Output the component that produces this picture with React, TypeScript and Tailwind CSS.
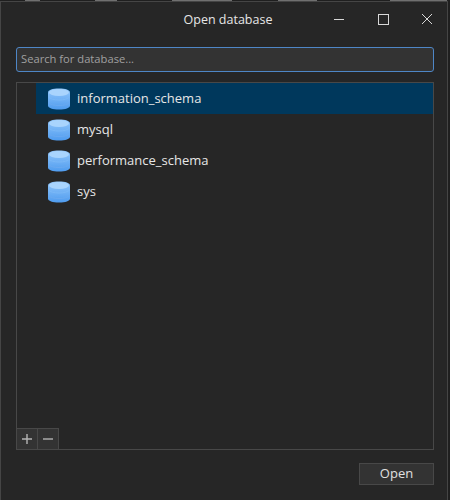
const rows = ["information_schema", "mysql", "performance_schema", "sys"];
const marks = [
  ["ml-[25px]", "w-[15px]"],
  ["ml-[55px]", "w-[22px]"],
  ["ml-[55px]", "w-[60px]"],
  ["ml-[46px]", "w-[39px]"],
  ["ml-[73px]", "w-[57px]"],
];

function DbIcon() {
  return (
    <svg width="24" height="24" viewBox="0 0 24 24" className="shrink-0">
      <defs>
        <linearGradient id="dbg" x1="0" y1="0" x2="0" y2="1">
          <stop offset="0" stopColor="#93c7fb" />
          <stop offset="1" stopColor="#4f9cef" />
        </linearGradient>
      </defs>
      <path d="M1 5.5C1 3 5.5 1.5 12 1.5S23 3 23 5.5V18.5C23 21 18.5 22.5 12 22.5S1 21 1 18.5Z" fill="url(#dbg)" />
      <ellipse cx="12" cy="5.5" rx="10" ry="3.4" fill="#a9d4fd" />
      <path d="M1 9.5C3 12 7 13 12 13S21 12 23 9.5" fill="none" stroke="#7ab8f7" strokeWidth="1" />
      <path d="M1 15C3 17.5 7 18.5 12 18.5S21 17.5 23 15" fill="none" stroke="#6aa9f0" strokeWidth="1" />
    </svg>
  );
}

export default function App() {
  return (
    <div className="w-[450px] h-[500px] bg-[#1f1f1f] overflow-hidden flex flex-col font-['Open_Sans','Noto_Sans',sans-serif] text-[#e6e6e6]">
      <div className="h-[1px] shrink-0 flex">
        {marks.map(([m, w], i) => (
          <div key={i} className={`h-[1px] bg-[#707070] ${m} ${w}`} />
        ))}
      </div>
      <div className="mr-[2px] flex-1 min-h-0 bg-[#262626] border-l border-t border-r border-[#454545] flex flex-col">
        <div className="h-[36px] shrink-0 flex items-center relative">
          <span className="w-full pl-[8px] text-center text-[12.5px]">Open database</span>
          <svg width="12" height="12" viewBox="0 0 12 12" className="absolute left-[332px] top-[11px]" stroke="#d8d8d8" fill="none"><path d="M1 6.5H11" /></svg>
          <svg width="12" height="12" viewBox="0 0 12 12" className="absolute left-[376px] top-[11px]" stroke="#d8d8d8" fill="none"><rect x="1.5" y="1.5" width="10" height="10" /></svg>
          <svg width="12" height="12" viewBox="0 0 12 12" className="absolute left-[420px] top-[11px]" stroke="#d8d8d8" fill="none"><path d="M1 1L11 11M11 1L1 11" /></svg>
        </div>
        <div className="flex-1 min-h-0 flex flex-col pl-[15px] pr-[13px] pt-[9px] pb-[15px]">
          <div className="h-[25px] shrink-0 rounded-[3px] border border-[#4e86c6] bg-[#333333] flex items-center px-[4px] text-[11.2px] text-[#a0a0a0]">Search for database...</div>
          <div className="mt-[10px] h-[368px] shrink-0 border border-[#484848] flex flex-col relative">
            <ul className="pl-[19px] flex flex-col">
              {rows.map((r, i) => (
                <li key={r} className={`h-[31px] flex items-center pl-[11px] gap-[6px] text-[13px] ${i === 0 ? "bg-[#00385c]" : ""}`}>
                  <DbIcon />
                  <span>{r}</span>
                </li>
              ))}
            </ul>
            <div className="absolute left-0 bottom-0 flex">
              <button className="w-[21px] h-[21px] bg-[#333333] border-t border-r border-[#484848] flex items-center justify-center">
                <svg width="12" height="12" viewBox="0 0 12 12" stroke="#b4b4b4" strokeWidth="1.4"><path d="M1 6H11M6 1V11" /></svg>
              </button>
              <button className="w-[21px] h-[21px] bg-[#333333] border-t border-r border-[#484848] flex items-center justify-center">
                <svg width="12" height="12" viewBox="0 0 12 12" stroke="#b4b4b4" strokeWidth="1.4"><path d="M1 6H11" /></svg>
              </button>
            </div>
          </div>
          <div className="mt-auto flex justify-end">
            <button className="w-[75px] h-[22px] bg-[#333333] border border-[#484848] text-[13px] text-[#e0e0e0] flex items-center justify-center">Open</button>
          </div>
        </div>
      </div>
    </div>
  );
}
